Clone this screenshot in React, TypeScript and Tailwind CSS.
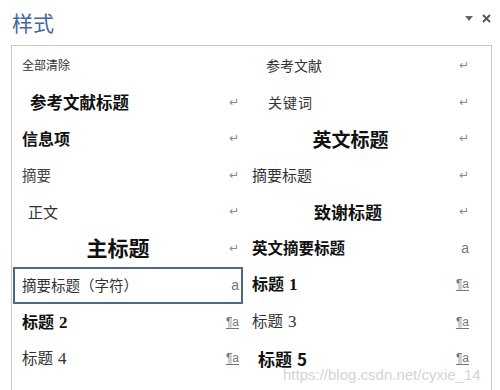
import type { ReactNode } from 'react';

type Mark = 'ret' | 'char' | 'link' | null;

type StyleItem = {
  label: ReactNode;
  mark: Mark;
  className: string;
  center?: boolean;
  selected?: boolean;
};

const cjk = 'font-["Noto_Sans_CJK_SC",sans-serif]';

// Heading number in a serif face, like Word's 标题 N preview
const num = (n: string, bold = true) => (
  <span className={`font-["Liberation_Serif",serif] ${bold ? 'font-bold' : ''} ml-[5px] text-[17px]`}>{n}</span>
);

const rows: [StyleItem, StyleItem][] = [
  [
    { label: '全部清除', mark: null, className: 'text-[12px] text-[#333]' },
    { label: '参考文献', mark: 'ret', className: 'text-[14px] text-[#333] ml-[14px]' },
  ],
  [
    { label: '参考文献标题', mark: 'ret', className: 'text-[16.5px] font-bold text-[#111] ml-[8px]' },
    { label: '关键词', mark: 'ret', className: 'text-[14px] text-[#333] ml-[16px] tracking-[1px]' },
  ],
  [
    { label: '信息项', mark: 'ret', className: 'text-[16px] font-bold text-[#111]' },
    { label: '英文标题', mark: 'ret', className: 'text-[19px] font-bold text-[#111] pl-[5px]', center: true },
  ],
  [
    { label: '摘要', mark: 'ret', className: 'text-[14.5px] text-[#444]' },
    { label: '摘要标题', mark: 'ret', className: 'text-[15px] text-[#333]' },
  ],
  [
    { label: '正文', mark: 'ret', className: 'text-[15px] text-[#333] ml-[6px]' },
    { label: '致谢标题', mark: 'ret', className: 'text-[17px] font-bold text-[#111]', center: true },
  ],
  [
    { label: '主标题', mark: 'ret', className: 'text-[21px] font-bold text-[#111]', center: true },
    { label: '英文摘要标题', mark: 'char', className: 'text-[15.5px] font-bold text-[#111]' },
  ],
  [
    { label: '摘要标题（字符）', mark: 'char', className: 'text-[14.5px] text-[#333]', selected: true },
    { label: <>标题{num('1')}</>, mark: 'link', className: 'text-[16px] font-bold text-[#111]' },
  ],
  [
    { label: <>标题{num('2')}</>, mark: 'link', className: 'text-[16px] font-bold text-[#111]' },
    { label: <>标题{num('3', false)}</>, mark: 'link', className: 'text-[15.5px] text-[#333]' },
  ],
  [
    { label: <>标题{num('4', false)}</>, mark: 'link', className: 'text-[15.5px] text-[#333]' },
    {
      label: (
        <>
          标题<span className="ml-[5px]">5</span>
        </>
      ),
      mark: 'link',
      className: 'text-[17px] font-bold text-[#111] ml-[6px]',
    },
  ],
];

function MarkGlyph({ mark }: { mark: Mark }) {
  if (mark === 'ret')
    return <span className='font-["DejaVu_Sans",sans-serif] text-[12px] text-[#8a8a8a]'>↵</span>;
  if (mark === 'char')
    return <span className='font-["Liberation_Sans",sans-serif] text-[14px] text-[#777]'>a</span>;
  if (mark === 'link')
    return (
      <span className='font-["Liberation_Sans",sans-serif] text-[12px] text-[#777] underline underline-offset-2'>
        ¶a
      </span>
    );
  return null;
}

function StyleCell({ item }: { item: StyleItem }) {
  return (
    <div
      className={`h-[36.5px] flex items-center leading-none ${
        item.selected ? 'border-2 border-[#4d6787] pl-[7px] pr-[2px] mt-[1px] h-[35px]' : 'pl-[9px] pr-[4px]'
      }`}
    >
      <span className={`${item.center ? 'flex-1 text-center pr-[9px]' : 'flex-1'} ${cjk} ${item.className} whitespace-nowrap`}>
        {item.label}
      </span>
      <span className="w-[16px] flex justify-end">
        <MarkGlyph mark={item.mark} />
      </span>
    </div>
  );
}

export default function App() {
  return (
    <div className="relative w-[500px] h-[390px] overflow-hidden bg-white flex flex-col">
      <div className="h-[45px] flex items-start justify-between">
        <span className={`${cjk} text-[21px] leading-none text-[#44679f] ml-[12px] mt-[12px]`}>样式</span>
        <div className="flex items-center gap-[9px] mt-[14px] mr-[9px]">
          <svg width="8" height="5" viewBox="0 0 8 5">
            <path d="M0 0h8L4 5z" fill="#666" />
          </svg>
          <svg width="9" height="9" viewBox="0 0 9 9">
            <path d="M1 1l7 7M8 1L1 8" stroke="#555" strokeWidth="1.8" />
          </svg>
        </div>
      </div>

      <div className="ml-[11px] w-[481px] flex-1 border border-b-0 border-[#c8c8c8] pt-[1px] pl-[1px]">
        <div className="grid grid-cols-[230px_230px]">
          {rows.map(([left, right], i) => (
            <div key={i} className="contents">
              <StyleCell item={left} />
              <StyleCell item={right} />
            </div>
          ))}
        </div>
      </div>

      <span className='absolute left-[283px] top-[367px] leading-none font-["Liberation_Sans",sans-serif] text-[15px] text-[#d4d4d4] whitespace-nowrap'>
        https://blog.csdn.net/cyxie_14
      </span>
    </div>
  );
}
